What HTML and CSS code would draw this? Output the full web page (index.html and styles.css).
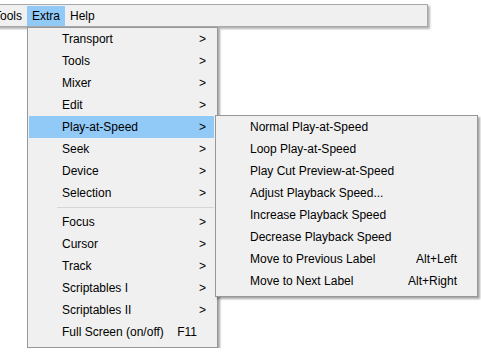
FILE: index.html
```html
<!DOCTYPE html>
<html lang="en">
<head>
    <meta charset="UTF-8">
    <title>Extra menu</title>
    <link rel="stylesheet" href="styles.css">
</head>
<body>
    <div class="menubar">
        <div class="bar-item">Tools</div>
        <div class="bar-item open">Extra</div>
        <div class="bar-item">Help</div>
    </div>
    <div class="menu main">
        <div class="item"><span>Transport</span><span class="arrow">&gt;</span></div>
        <div class="item"><span>Tools</span><span class="arrow">&gt;</span></div>
        <div class="item"><span>Mixer</span><span class="arrow">&gt;</span></div>
        <div class="item"><span>Edit</span><span class="arrow">&gt;</span></div>
        <div class="item active"><span>Play-at-Speed</span><span class="arrow">&gt;</span>
            <div class="menu sub">
                <div class="item"><span>Normal Play-at-Speed</span></div>
                <div class="item"><span>Loop Play-at-Speed</span></div>
                <div class="item"><span>Play Cut Preview-at-Speed</span></div>
                <div class="item"><span>Adjust Playback Speed...</span></div>
                <div class="item"><span>Increase Playback Speed</span></div>
                <div class="item"><span>Decrease Playback Speed</span></div>
                <div class="item"><span>Move to Previous Label</span><span class="key">Alt+Left</span></div>
                <div class="item"><span>Move to Next Label</span><span class="key">Alt+Right</span></div>
            </div>
        </div>
        <div class="item"><span>Seek</span><span class="arrow">&gt;</span></div>
        <div class="item"><span>Device</span><span class="arrow">&gt;</span></div>
        <div class="item"><span>Selection</span><span class="arrow">&gt;</span></div>
        <div class="sep"></div>
        <div class="item"><span>Focus</span><span class="arrow">&gt;</span></div>
        <div class="item"><span>Cursor</span><span class="arrow">&gt;</span></div>
        <div class="item"><span>Track</span><span class="arrow">&gt;</span></div>
        <div class="item"><span>Scriptables I</span><span class="arrow">&gt;</span></div>
        <div class="item"><span>Scriptables II</span><span class="arrow">&gt;</span></div>
        <div class="item"><span>Full Screen (on/off)</span><span class="key">F11</span></div>
    </div>
</body>
</html>
```

FILE: styles.css
```css
* {
    box-sizing: border-box;
    margin: 0;
    padding: 0;
}
body {
    background: #fff;
    font-family: "Liberation Sans", Arial, sans-serif;
    font-size: 12px;
    color: #000;
}
.menubar {
    display: flex;
    width: 440px;
    height: 23px;
    margin-top: 4px;
    margin-left: -12px;
    padding-top: 1px;
    border: 1px solid #a8a8a8;
    background: #f0f0f0;
    box-shadow: 2px 2px 2px rgba(0, 0, 0, .3);
}
.bar-item {
    height: 20px;
    line-height: 20px;
    padding: 0 5px;
}
.bar-item.open {
    background: #91c9f7;
}
.menu {
    background: #f0f0f0;
    border: 1px solid #979797;
    box-shadow: 2px 2px 2px rgba(0, 0, 0, .35);
    line-height: 22px;
    padding: 0 3px 4px 1px;
}
.main {
    position: relative;
    width: 191px;
    margin-left: 27px;
}
.sub {
    position: absolute;
    top: -1px;
    left: 186px;
    width: 263px;
}
.item {
    display: flex;
    justify-content: space-between;
    height: 22px;
    padding-left: 33px;
    padding-right: 17px;
    white-space: nowrap;
}
.item.active {
    position: relative;
    background: #91c9f7;
}
.sub .item {
    background: #f0f0f0;
}
.arrow {
    margin-right: -9px;
}
.sep {
    height: 7px;
    margin-left: 28px;
    background: linear-gradient(#f0f0f0 3px, #d5d5d5 3px, #d5d5d5 4px, #f0f0f0 4px);
}
```
